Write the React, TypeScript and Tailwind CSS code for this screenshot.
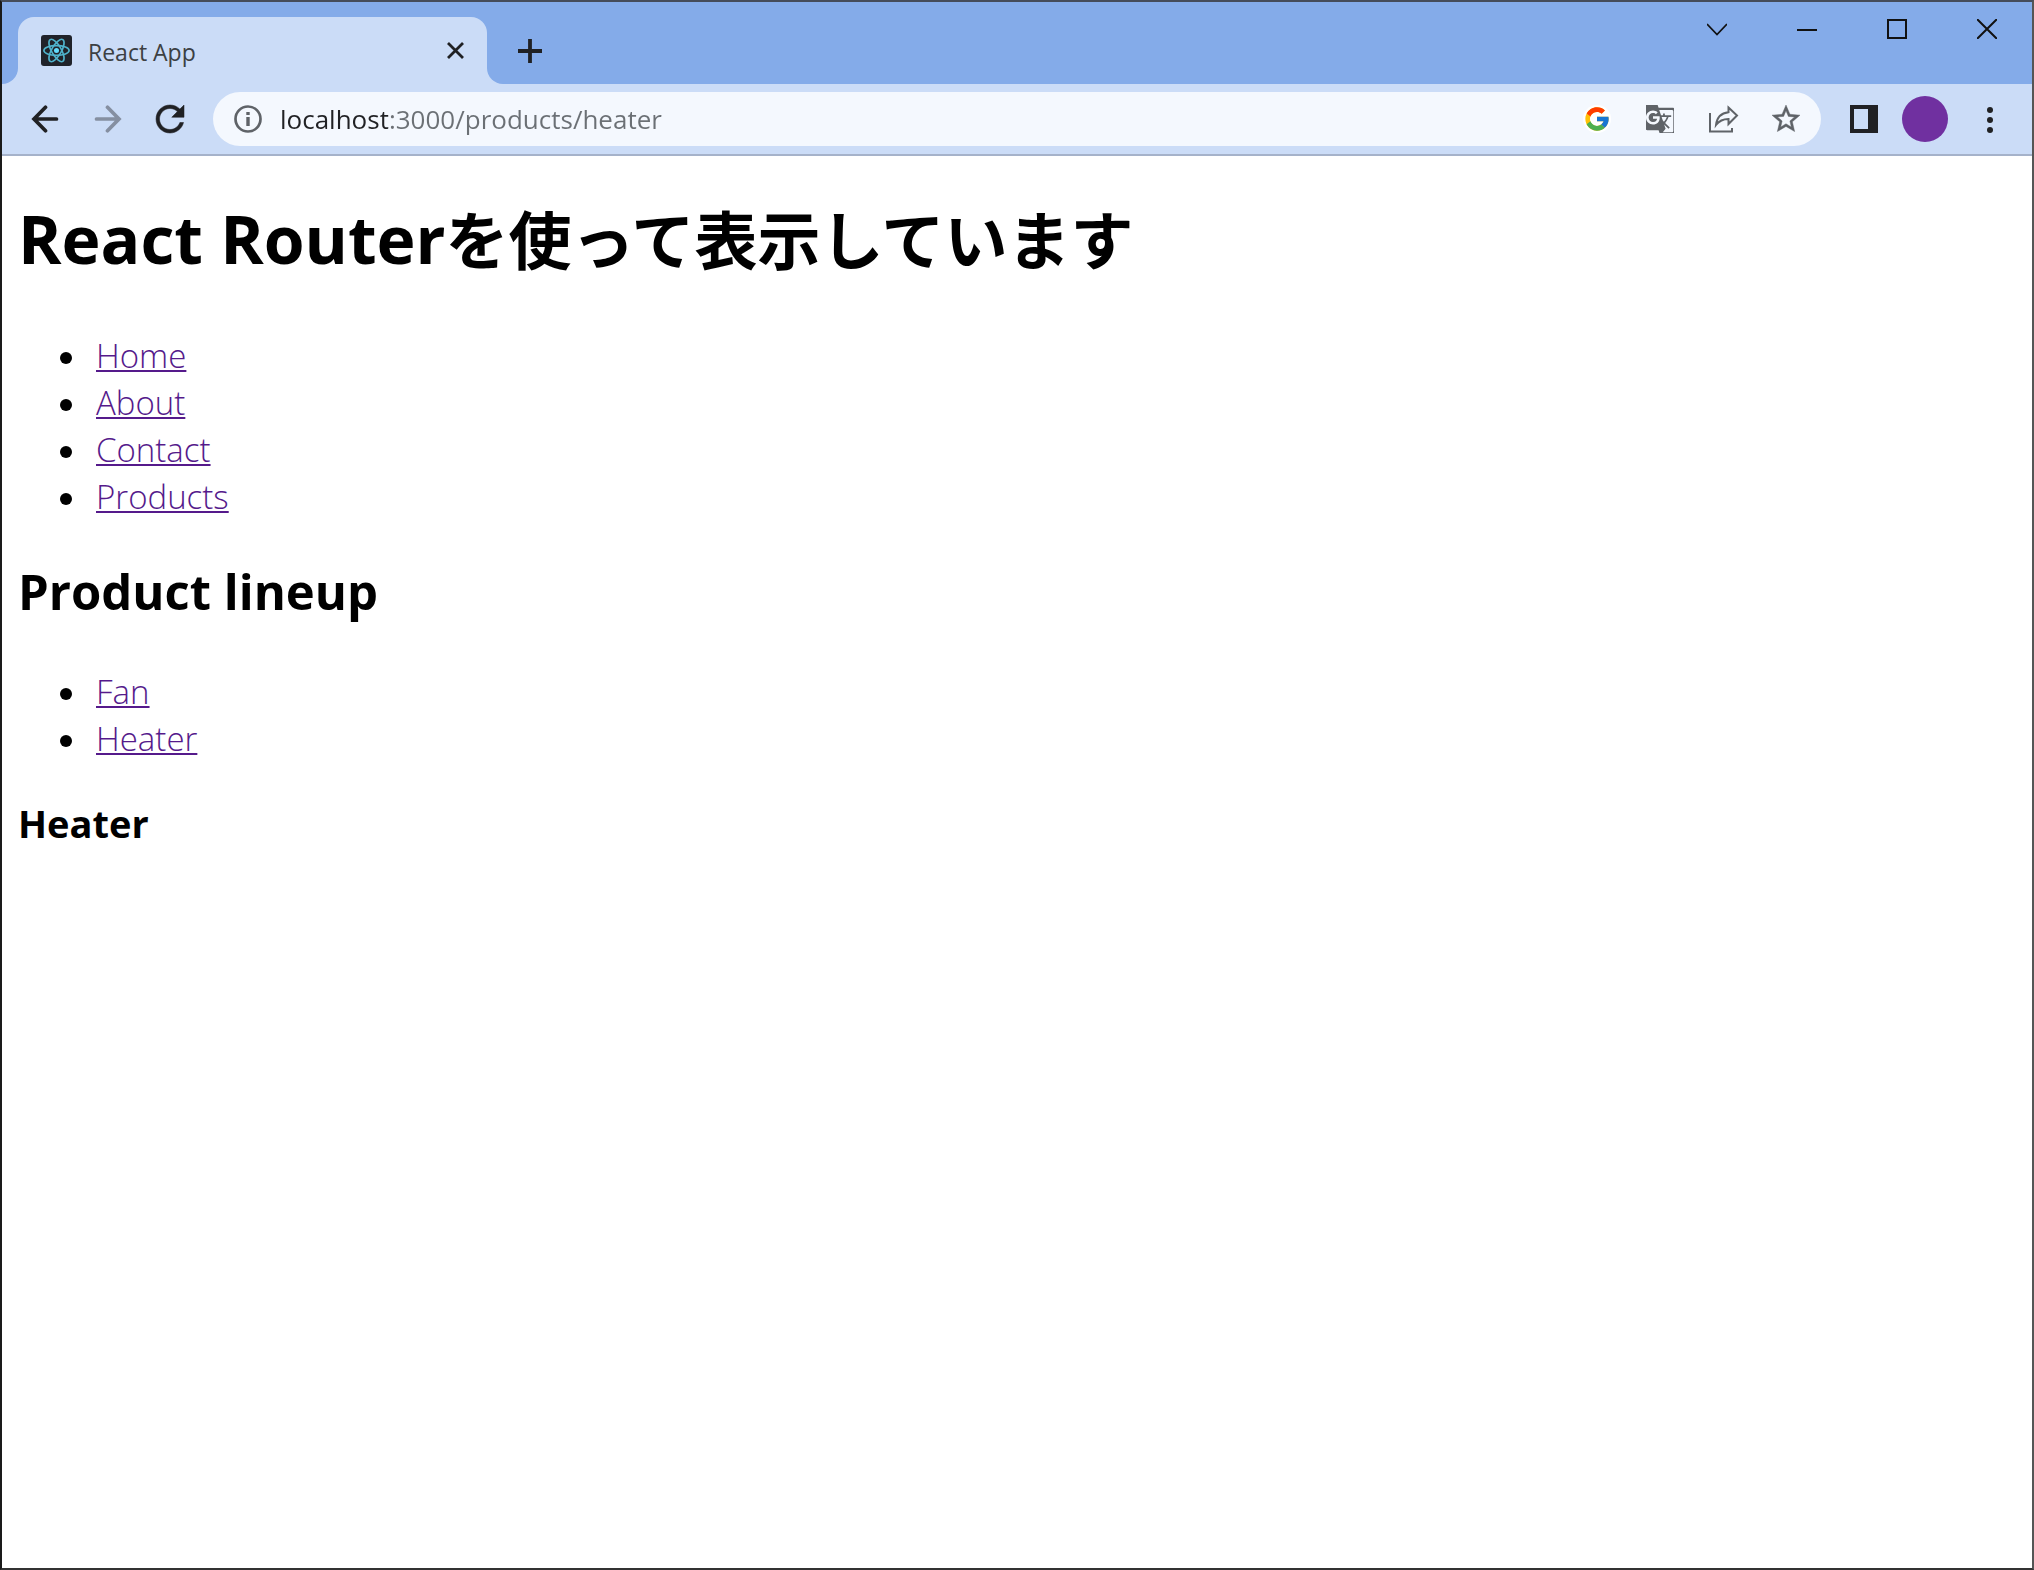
import React from "react";
import { FcGoogle } from "react-icons/fc";
import { MdGTranslate, MdStarBorder } from "react-icons/md";

const mainLinks = ["Home", "About", "Contact", "Products"];
const productLinks = ["Fan", "Heater"];

function LinkList({ items }: { items: string[] }) {
  return (
    <ul className="flex flex-col">
      {items.map((item) => (
        <li key={item} className="flex h-[47px] items-center">
          <span className="mt-1 ml-[42px] size-[12px] rounded-full bg-black" />
          <a
            href="#"
            className="ml-[24px] text-[33px] leading-[47px] font-light text-[#551a8b] underline decoration-2 underline-offset-2"
          >
            {item}
          </a>
        </li>
      ))}
    </ul>
  );
}

function ReactLogo() {
  return (
    <svg className="size-[31px] shrink-0" viewBox="0 0 32 32" aria-hidden="true">
      <rect width="32" height="32" rx="3" fill="#20232a" />
      <g fill="none" stroke="#4fb3cc" strokeWidth="1.7">
        <ellipse cx="16" cy="16" rx="13" ry="5" />
        <ellipse cx="16" cy="16" rx="13" ry="5" transform="rotate(60 16 16)" />
        <ellipse cx="16" cy="16" rx="13" ry="5" transform="rotate(120 16 16)" />
      </g>
      <circle cx="16" cy="16" r="2.6" fill="#61dafb" />
    </svg>
  );
}

function TabStrip() {
  return (
    <div className="flex h-[82px] bg-[#84abe9]">
      <div className="flex w-[16px] items-end">
        <div className="h-[16px] w-full bg-[#cbdcf7]">
          <div className="size-full rounded-br-[16px] bg-[#84abe9]" />
        </div>
      </div>
      <div className="mt-[15px] flex w-[469px] items-center rounded-t-[16px] bg-[#cbdcf7] px-[23px]">
        <ReactLogo />
        <span className="ml-[16px] flex-1 pt-[2px] text-[23px] leading-[32px] text-[#3c4043]">React App</span>
        <button aria-label="Close tab" className="text-[#202124]">
          <svg className="size-[17px]" viewBox="0 0 17 17" fill="none" stroke="currentColor" strokeWidth="2.8">
            <path d="M1 1l15 15M16 1L1 16" />
          </svg>
        </button>
      </div>
      <div className="flex w-[16px] items-end">
        <div className="h-[16px] w-full bg-[#cbdcf7]">
          <div className="size-full rounded-bl-[16px] bg-[#84abe9]" />
        </div>
      </div>
      <button aria-label="New tab" className="ml-[15px] self-start pt-[37px] text-[#202124]">
        <svg className="size-[24px]" viewBox="0 0 24 24" fill="none" stroke="currentColor" strokeWidth="3.8">
          <path d="M12 0v24M0 12h24" />
        </svg>
      </button>
      <div className="ml-auto flex h-[54px] items-center gap-[70px] pr-[35px] text-[#111]">
        <button aria-label="Search tabs">
          <svg className="size-[20px]" viewBox="0 0 20 20" fill="none" stroke="currentColor" strokeWidth="1.8">
            <path d="M0 5l10 10.500L20 5" />
          </svg>
        </button>
        <button aria-label="Minimize">
          <svg className="size-[20px]" viewBox="0 0 20 20" fill="none" stroke="currentColor" strokeWidth="2">
            <path d="M0 11h20" />
          </svg>
        </button>
        <button aria-label="Maximize">
          <svg className="size-[20px]" viewBox="0 0 20 20" fill="none" stroke="currentColor" strokeWidth="2">
            <path d="M1 1h18v18H1z" />
          </svg>
        </button>
        <button aria-label="Close window">
          <svg className="size-[20px]" viewBox="0 0 20 20" fill="none" stroke="currentColor" strokeWidth="2">
            <path d="M0 0l20 20M20 0L0 20" />
          </svg>
        </button>
      </div>
    </div>
  );
}

function AddressBar() {
  return (
    <div className="ml-[29px] flex h-[54px] flex-1 items-center rounded-full bg-[#f4f8fe] px-[21px] text-[#5f6368]">
      <button aria-label="Site information">
        <svg className="size-[28px]" viewBox="0 0 28 28" fill="none" stroke="currentColor" strokeWidth="2.7">
          <circle cx="14" cy="14" r="12.500" />
          <path d="M14 12v9M14 7v3" strokeWidth="3.4" />
        </svg>
      </button>
      <input
        aria-label="Address"
        defaultValue="localhost:3000/products/heater"
        className="ml-[18px] min-w-0 flex-1 bg-[linear-gradient(to_right,#202124_108px,#6b7075_108px)] bg-clip-text text-[26px] leading-[36px] text-transparent outline-none"
      />
      <div className="flex items-center gap-[35px]">
        <button aria-label="Search with Google" className="rounded-full bg-white">
          <FcGoogle className="size-[28px]" />
        </button>
        <button aria-label="Translate this page">
          <MdGTranslate className="size-[28px]" viewBox="2 2 20 20" />
        </button>
        <button aria-label="Share this page">
          <svg
            className="size-[28px] overflow-visible"
            viewBox="0 0 28 28"
            fill="none"
            stroke="currentColor"
            strokeWidth="2"
          >
            <path d="M1 8v18.500h22V23" />
            <path d="M19.500 2.500L28 10.500l-8.500 8.500v-5C14 14 10 16 7 20c.8-7.500 5-12 12.500-12.800z" />
          </svg>
        </button>
        <button aria-label="Bookmark this tab">
          <MdStarBorder className="size-[28px]" viewBox="2 2 20 20" stroke="currentColor" strokeWidth="0.3" />
        </button>
      </div>
    </div>
  );
}

function Toolbar() {
  return (
    <div className="flex h-[72px] items-center border-b-2 border-[#a5b2ca] bg-[#cbdcf7] pr-[38px] pl-[29px] text-[#202124]">
      <button aria-label="Back">
        <svg
          className="size-[28px]"
          viewBox="0 0 28 28"
          fill="none"
          stroke="currentColor"
          strokeWidth="3.7"
          strokeLinecap="round"
        >
          <path d="M25.500 14H3.500M14.500 2.300L3 14l11.500 11.700" />
        </svg>
      </button>
      <button aria-label="Forward" className="ml-[35px] text-[#858fa1]">
        <svg
          className="size-[28px]"
          viewBox="0 0 28 28"
          fill="none"
          stroke="currentColor"
          strokeWidth="3.7"
          strokeLinecap="round"
        >
          <path d="M2.500 14h22M13.500 2.300L25 14 13.500 25.700" />
        </svg>
      </button>
      <button aria-label="Reload" className="ml-[34px]">
        <svg
          className="size-[28px] overflow-visible"
          viewBox="4 4 16 16"
          fill="currentColor"
          stroke="currentColor"
          strokeWidth="0.3"
        >
          <path d="M17.650 6.350C16.200 4.900 14.210 4 12 4c-4.420 0-7.990 3.580-7.990 8s3.570 8 7.990 8c3.730 0 6.840-2.550 7.730-6h-2.080c-.82 2.330-3.040 4-5.650 4-3.310 0-6-2.690-6-6s2.690-6 6-6c1.660 0 3.140.69 4.220 1.780L13 11h7V4l-2.350 2.350z" />
        </svg>
      </button>
      <AddressBar />
      <button aria-label="Side panel" className="ml-[29px]">
        <svg className="size-[28px]" viewBox="0 0 28 28">
          <path fill="currentColor" fillRule="evenodd" d="M0 0h28v28H0zM4 4v20h14V4z" />
        </svg>
      </button>
      <button aria-label="Profile" className="ml-[24px] size-[46px] rounded-full bg-[#7030a0]" />
      <button aria-label="Menu" className="ml-[38px]">
        <svg className="h-[28px] w-[8px]" viewBox="0 0 8 28" fill="currentColor">
          <circle cx="4" cy="5" r="3" />
          <circle cx="4" cy="15" r="3" />
          <circle cx="4" cy="25" r="3" />
        </svg>
      </button>
    </div>
  );
}

export default function App() {
  return (
    <div className="flex min-h-screen flex-col border-2 border-t-[#454c5a] border-r-[#555555] border-b-[#333333] border-l-[#1a1a1a] bg-white font-['Open_Sans','Noto_Sans_CJK_JP',sans-serif] text-black">
      <TabStrip />
      <Toolbar />
      <main className="flex flex-col px-[16px]">
        <h1 className="mt-[38px] mb-[48px] text-[66px] leading-[88px] font-bold">
          React Router<span className="text-[63px]">を使って表示しています</span>
        </h1>
        <LinkList items={mainLinks} />
        <h2 className="mt-[35px] mb-[41px] text-[49px] leading-[72px] font-bold">Product lineup</h2>
        <LinkList items={productLinks} />
        <h3 className="mt-[33px] text-[38px] leading-[56px] font-bold">Heater</h3>
      </main>
    </div>
  );
}
